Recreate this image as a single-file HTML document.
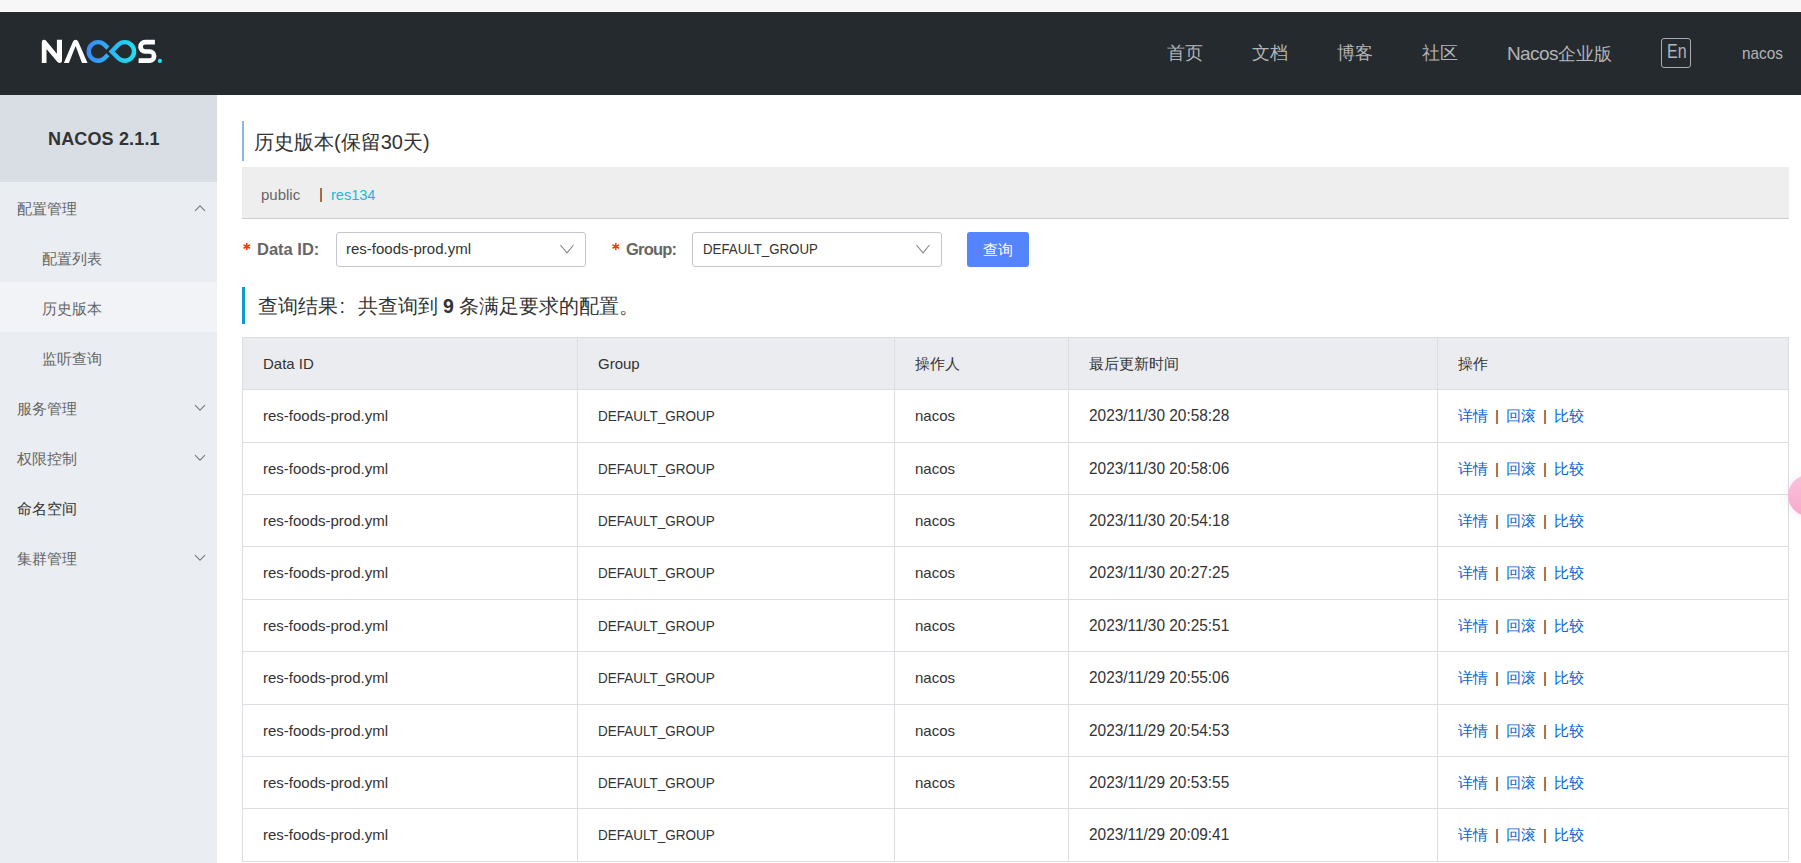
<!DOCTYPE html>
<html><head><meta charset="utf-8">
<style>
*{margin:0;padding:0;box-sizing:border-box}
html,body{width:1801px;height:863px;overflow:hidden;background:#fff;font-family:"Liberation Sans",sans-serif;color:#333}
.abs{position:absolute}
.t{position:absolute;white-space:nowrap}
#topstrip{left:0;top:0;width:1801px;height:11px;background:#f7f7f7}
#header{left:0;top:12px;width:1801px;height:83px;background:#252a2f}
.nav{position:absolute;top:0;height:83px;line-height:83px;color:#b3b4b6;font-size:17.5px;white-space:nowrap}
#side{left:0;top:95px;width:217px;height:768px;background:#eaedf1}
#sidetitle{left:0;top:0;width:217px;height:87px;background:#d9dee4}
.mi{position:absolute;left:0;width:217px;height:50px;font-size:15px;color:#666;white-space:nowrap}
.mi span{position:absolute;top:17px;line-height:20px}
.mi.sub span{left:42px}
.mi.top span{left:17px}
.mi.sel{background:#f2f3f7}
.chev{position:absolute;left:194px}
.lk .a{color:#0563d3}
.lk .sp{color:#333;margin:0 7px}
.sx{display:inline-block;transform-origin:0 50%}
</style></head><body>
<div id="topstrip" class="abs"></div>
<div id="header" class="abs">
<svg class="abs" style="left:40px;top:26px" width="130" height="30" viewBox="0 0 130 30">
    <defs><linearGradient id="g1" gradientUnits="userSpaceOnUse" x1="47" x2="97" y1="0" y2="0"><stop offset="0" stop-color="#3b88f7"/><stop offset="1" stop-color="#1ce6f2"/></linearGradient></defs>
    <path d="M1.8 24.9 V4 Q1.8 1.8 4 1.8 Q5.4 1.8 6.3 3 L16.9 15.7 V1.8 H22 V22.7 Q22 24.9 19.6 24.9 Q18 24.9 17 23.6 L6.5 10.9 V24.9 Z" fill="#fff"/>
    <path d="M23.9 24.9 L33 3.6 Q33.8 1.8 35.6 1.8 Q37.4 1.8 38.2 3.6 L47.5 24.9 H42 L35.6 7.9 L28.9 24.9 Z" fill="#fff"/>
    <path d="M67.9 10.1 L64.63 6.87 A9.3 9.3 0 1 0 64.63 20.03 L67.9 16.8" fill="none" stroke="url(#g1)" stroke-width="4.4"/>
    <path d="M71.6 13.45 L78.17 6.87 A9.3 9.3 0 1 1 78.17 20.03 Z" fill="none" stroke="url(#g1)" stroke-width="4.4" stroke-linejoin="miter"/>
    <path d="M114.9 4.15 H105.2 A4.675 4.675 0 0 0 105.2 13.5 H109.6 A4.525 4.525 0 0 1 109.6 22.55 H98.6" fill="none" stroke="#fff" stroke-width="4.7"/>
    <circle cx="119.9" cy="22.9" r="2.1" fill="#1ce6f2"/>
  </svg>
<div class="nav" style="left:1167px">首页</div>
<div class="nav" style="left:1252px">文档</div>
<div class="nav" style="left:1337px">博客</div>
<div class="nav" style="left:1422px">社区</div>
<div class="nav" style="left:1507px"><span style="font-size:19px;letter-spacing:-0.6px">Nacos</span>企业版</div>
<div class="abs" style="left:1661px;top:26px;width:30px;height:30px;border:1px solid #a9abad;border-radius:3px"></div>
<div class="nav" style="left:1667px;top:-2px;font-size:19.5px"><span class="sx" style="transform:scaleX(0.82)">En</span></div>
<div class="nav" style="left:1742px;top:0px;font-size:17px"><span class="sx" style="transform:scaleX(0.9)">nacos</span></div>
</div>
<div id="side" class="abs">
<div id="sidetitle" class="abs"><div class="t" style="left:48px;top:29px;line-height:30px;font-weight:bold;font-size:18px;letter-spacing:0.15px;color:#333">NACOS 2.1.1</div></div>
<div class="mi top" style="top:87px;"><span>配置管理</span><svg class="chev" style="top:22px" width="12" height="8" viewBox="0 0 12 8"><path d="M1 6.8 L6 1.8 L11 6.8" fill="none" stroke="#7a7a7a" stroke-width="1.05"/></svg></div>
<div class="mi sub" style="top:137px;"><span>配置列表</span></div>
<div class="mi sub sel" style="top:187px;"><span>历史版本</span></div>
<div class="mi sub" style="top:237px;"><span>监听查询</span></div>
<div class="mi top" style="top:287px;"><span>服务管理</span><svg class="chev" style="top:22px" width="12" height="8" viewBox="0 0 12 8"><path d="M1 1.2 L6 6.2 L11 1.2" fill="none" stroke="#7a7a7a" stroke-width="1.05"/></svg></div>
<div class="mi top" style="top:337px;"><span>权限控制</span><svg class="chev" style="top:22px" width="12" height="8" viewBox="0 0 12 8"><path d="M1 1.2 L6 6.2 L11 1.2" fill="none" stroke="#7a7a7a" stroke-width="1.05"/></svg></div>
<div class="mi top" style="top:387px;color:#333"><span>命名空间</span></div>
<div class="mi top" style="top:437px;"><span>集群管理</span><svg class="chev" style="top:22px" width="12" height="8" viewBox="0 0 12 8"><path d="M1 1.2 L6 6.2 L11 1.2" fill="none" stroke="#7a7a7a" stroke-width="1.05"/></svg></div>
</div>
<div class="abs" style="left:242px;top:121px;width:2px;height:40px;background:#88b7e0"></div>
<div class="t" style="left:254px;top:127px;font-size:20px;line-height:30px;color:#333">历史版本(保留30天)</div>
<div class="abs" style="left:242px;top:167px;width:1547px;height:52px;background:#eee;border-bottom:1px solid #ccc"></div>
<div class="t" style="left:261px;top:185px;font-size:15px;line-height:20px;color:#666">public</div>
<div class="t" style="left:319px;top:184px;font-size:15px;line-height:20px;color:#333">|</div>
<div class="t" style="left:331px;top:185px;font-size:14.5px;line-height:20px;color:#0fbddf">res134</div>
<svg class="abs" style="left:242px;top:242px" width="9" height="9" viewBox="0 0 9 9"><g stroke="#ff3300" stroke-width="1.5" stroke-linecap="round"><path d="M4.8 1.6 V7.4"/><path d="M2 3.1 L7.6 6"/><path d="M2 6 L7.6 3.1"/></g></svg>
<div class="t" style="left:257px;top:239px;font-size:16.5px;line-height:20px;color:#666;font-weight:bold">Data ID:</div>
<div class="abs" style="left:336px;top:232px;width:250px;height:35px;border:1px solid #c4c6cf;border-radius:3px;background:#fff"></div>
<div class="t" style="left:346px;top:239px;font-size:15px;line-height:20px;color:#333">res-foods-prod.yml</div>
<svg class="abs" style="left:559px;top:244px" width="16" height="10" viewBox="0 0 16 10"><path d="M1.5 1 L8 8.8 L14.5 1" fill="none" stroke="#858585" stroke-width="1.1"/></svg>
<svg class="abs" style="left:611px;top:242px" width="9" height="9" viewBox="0 0 9 9"><g stroke="#ff3300" stroke-width="1.5" stroke-linecap="round"><path d="M4.8 1.6 V7.4"/><path d="M2 3.1 L7.6 6"/><path d="M2 6 L7.6 3.1"/></g></svg>
<div class="t" style="left:626px;top:239px;font-size:16.5px;line-height:20px;color:#666;font-weight:bold;letter-spacing:-0.8px">Group:</div>
<div class="abs" style="left:692px;top:232px;width:250px;height:35px;border:1px solid #c4c6cf;border-radius:3px;background:#fff"></div>
<div class="t" style="left:703px;top:239px;font-size:15px;line-height:20px;color:#333"><span class="sx" style="transform:scaleX(0.885)">DEFAULT_GROUP</span></div>
<svg class="abs" style="left:915px;top:244px" width="16" height="10" viewBox="0 0 16 10"><path d="M1.5 1 L8 8.8 L14.5 1" fill="none" stroke="#858585" stroke-width="1.1"/></svg>
<div class="abs" style="left:967px;top:232px;width:62px;height:35px;border-radius:3px;background:#5584ff;color:#fff;font-size:15px;line-height:35px;text-align:center">查询</div>
<div class="abs" style="left:242px;top:287px;width:3px;height:37px;background:#0e9ad0"></div>
<div class="t" style="left:258px;top:292px;font-size:19.5px;line-height:28px;color:#333">查询结果<span style="display:inline-block;width:19.5px;padding-left:1.6px">:</span>共查询到 <b>9</b> 条满足要求的配置。</div>
<div class="abs" style="left:242px;top:337px;width:1547px;height:53px;background:#ebecf0"></div>
<div class="abs" style="left:242px;top:337px;width:1547px;height:1px;background:#dcdee3"></div>
<div class="abs" style="left:242px;top:389px;width:1547px;height:1px;background:#dcdee3"></div>
<div class="abs" style="left:242px;top:442px;width:1547px;height:1px;background:#dcdee3"></div>
<div class="abs" style="left:242px;top:494px;width:1547px;height:1px;background:#dcdee3"></div>
<div class="abs" style="left:242px;top:546px;width:1547px;height:1px;background:#dcdee3"></div>
<div class="abs" style="left:242px;top:599px;width:1547px;height:1px;background:#dcdee3"></div>
<div class="abs" style="left:242px;top:651px;width:1547px;height:1px;background:#dcdee3"></div>
<div class="abs" style="left:242px;top:704px;width:1547px;height:1px;background:#dcdee3"></div>
<div class="abs" style="left:242px;top:756px;width:1547px;height:1px;background:#dcdee3"></div>
<div class="abs" style="left:242px;top:808px;width:1547px;height:1px;background:#dcdee3"></div>
<div class="abs" style="left:242px;top:861px;width:1547px;height:1px;background:#dcdee3"></div>
<div class="abs" style="left:242px;top:337px;width:1px;height:525px;background:#dcdee3"></div>
<div class="abs" style="left:577px;top:337px;width:1px;height:525px;background:#dcdee3"></div>
<div class="abs" style="left:894px;top:337px;width:1px;height:525px;background:#dcdee3"></div>
<div class="abs" style="left:1068px;top:337px;width:1px;height:525px;background:#dcdee3"></div>
<div class="abs" style="left:1437px;top:337px;width:1px;height:525px;background:#dcdee3"></div>
<div class="abs" style="left:1788px;top:337px;width:1px;height:525px;background:#dcdee3"></div>
<div class="t" style="left:263px;top:354.0px;font-size:15px;line-height:20px;color:#333">Data ID</div>
<div class="t" style="left:598px;top:354.0px;font-size:15px;line-height:20px;color:#333">Group</div>
<div class="t" style="left:915px;top:354.0px;font-size:15px;line-height:20px;color:#333">操作人</div>
<div class="t" style="left:1089px;top:354.0px;font-size:15px;line-height:20px;color:#333">最后更新时间</div>
<div class="t" style="left:1458px;top:354.0px;font-size:15px;line-height:20px;color:#333">操作</div>
<div class="t" style="left:263px;top:406.0px;font-size:15px;line-height:20px;color:#333">res-foods-prod.yml</div>
<div class="t" style="left:598px;top:406.0px;font-size:15px;line-height:20px;color:#333"><span class="sx" style="transform:scaleX(0.9)">DEFAULT_GROUP</span></div>
<div class="t" style="left:915px;top:406.0px;font-size:15px;line-height:20px;color:#333">nacos</div>
<div class="t" style="left:1089px;top:406.0px;font-size:16px;line-height:20px;color:#333"><span class="sx" style="transform:scaleX(0.963)">2023/11/30 20:58:28</span></div>
<div class="t lk" style="left:1458px;top:406.0px;font-size:15px;line-height:20px"><span class="a">详情</span><span class="sp">|</span><span class="a">回滚</span><span class="sp">|</span><span class="a">比较</span></div>
<div class="t" style="left:263px;top:458.5px;font-size:15px;line-height:20px;color:#333">res-foods-prod.yml</div>
<div class="t" style="left:598px;top:458.5px;font-size:15px;line-height:20px;color:#333"><span class="sx" style="transform:scaleX(0.9)">DEFAULT_GROUP</span></div>
<div class="t" style="left:915px;top:458.5px;font-size:15px;line-height:20px;color:#333">nacos</div>
<div class="t" style="left:1089px;top:458.5px;font-size:16px;line-height:20px;color:#333"><span class="sx" style="transform:scaleX(0.963)">2023/11/30 20:58:06</span></div>
<div class="t lk" style="left:1458px;top:458.5px;font-size:15px;line-height:20px"><span class="a">详情</span><span class="sp">|</span><span class="a">回滚</span><span class="sp">|</span><span class="a">比较</span></div>
<div class="t" style="left:263px;top:510.5px;font-size:15px;line-height:20px;color:#333">res-foods-prod.yml</div>
<div class="t" style="left:598px;top:510.5px;font-size:15px;line-height:20px;color:#333"><span class="sx" style="transform:scaleX(0.9)">DEFAULT_GROUP</span></div>
<div class="t" style="left:915px;top:510.5px;font-size:15px;line-height:20px;color:#333">nacos</div>
<div class="t" style="left:1089px;top:510.5px;font-size:16px;line-height:20px;color:#333"><span class="sx" style="transform:scaleX(0.963)">2023/11/30 20:54:18</span></div>
<div class="t lk" style="left:1458px;top:510.5px;font-size:15px;line-height:20px"><span class="a">详情</span><span class="sp">|</span><span class="a">回滚</span><span class="sp">|</span><span class="a">比较</span></div>
<div class="t" style="left:263px;top:563.0px;font-size:15px;line-height:20px;color:#333">res-foods-prod.yml</div>
<div class="t" style="left:598px;top:563.0px;font-size:15px;line-height:20px;color:#333"><span class="sx" style="transform:scaleX(0.9)">DEFAULT_GROUP</span></div>
<div class="t" style="left:915px;top:563.0px;font-size:15px;line-height:20px;color:#333">nacos</div>
<div class="t" style="left:1089px;top:563.0px;font-size:16px;line-height:20px;color:#333"><span class="sx" style="transform:scaleX(0.963)">2023/11/30 20:27:25</span></div>
<div class="t lk" style="left:1458px;top:563.0px;font-size:15px;line-height:20px"><span class="a">详情</span><span class="sp">|</span><span class="a">回滚</span><span class="sp">|</span><span class="a">比较</span></div>
<div class="t" style="left:263px;top:615.5px;font-size:15px;line-height:20px;color:#333">res-foods-prod.yml</div>
<div class="t" style="left:598px;top:615.5px;font-size:15px;line-height:20px;color:#333"><span class="sx" style="transform:scaleX(0.9)">DEFAULT_GROUP</span></div>
<div class="t" style="left:915px;top:615.5px;font-size:15px;line-height:20px;color:#333">nacos</div>
<div class="t" style="left:1089px;top:615.5px;font-size:16px;line-height:20px;color:#333"><span class="sx" style="transform:scaleX(0.963)">2023/11/30 20:25:51</span></div>
<div class="t lk" style="left:1458px;top:615.5px;font-size:15px;line-height:20px"><span class="a">详情</span><span class="sp">|</span><span class="a">回滚</span><span class="sp">|</span><span class="a">比较</span></div>
<div class="t" style="left:263px;top:668.0px;font-size:15px;line-height:20px;color:#333">res-foods-prod.yml</div>
<div class="t" style="left:598px;top:668.0px;font-size:15px;line-height:20px;color:#333"><span class="sx" style="transform:scaleX(0.9)">DEFAULT_GROUP</span></div>
<div class="t" style="left:915px;top:668.0px;font-size:15px;line-height:20px;color:#333">nacos</div>
<div class="t" style="left:1089px;top:668.0px;font-size:16px;line-height:20px;color:#333"><span class="sx" style="transform:scaleX(0.963)">2023/11/29 20:55:06</span></div>
<div class="t lk" style="left:1458px;top:668.0px;font-size:15px;line-height:20px"><span class="a">详情</span><span class="sp">|</span><span class="a">回滚</span><span class="sp">|</span><span class="a">比较</span></div>
<div class="t" style="left:263px;top:720.5px;font-size:15px;line-height:20px;color:#333">res-foods-prod.yml</div>
<div class="t" style="left:598px;top:720.5px;font-size:15px;line-height:20px;color:#333"><span class="sx" style="transform:scaleX(0.9)">DEFAULT_GROUP</span></div>
<div class="t" style="left:915px;top:720.5px;font-size:15px;line-height:20px;color:#333">nacos</div>
<div class="t" style="left:1089px;top:720.5px;font-size:16px;line-height:20px;color:#333"><span class="sx" style="transform:scaleX(0.963)">2023/11/29 20:54:53</span></div>
<div class="t lk" style="left:1458px;top:720.5px;font-size:15px;line-height:20px"><span class="a">详情</span><span class="sp">|</span><span class="a">回滚</span><span class="sp">|</span><span class="a">比较</span></div>
<div class="t" style="left:263px;top:772.5px;font-size:15px;line-height:20px;color:#333">res-foods-prod.yml</div>
<div class="t" style="left:598px;top:772.5px;font-size:15px;line-height:20px;color:#333"><span class="sx" style="transform:scaleX(0.9)">DEFAULT_GROUP</span></div>
<div class="t" style="left:915px;top:772.5px;font-size:15px;line-height:20px;color:#333">nacos</div>
<div class="t" style="left:1089px;top:772.5px;font-size:16px;line-height:20px;color:#333"><span class="sx" style="transform:scaleX(0.963)">2023/11/29 20:53:55</span></div>
<div class="t lk" style="left:1458px;top:772.5px;font-size:15px;line-height:20px"><span class="a">详情</span><span class="sp">|</span><span class="a">回滚</span><span class="sp">|</span><span class="a">比较</span></div>
<div class="t" style="left:263px;top:825.0px;font-size:15px;line-height:20px;color:#333">res-foods-prod.yml</div>
<div class="t" style="left:598px;top:825.0px;font-size:15px;line-height:20px;color:#333"><span class="sx" style="transform:scaleX(0.9)">DEFAULT_GROUP</span></div>
<div class="t" style="left:1089px;top:825.0px;font-size:16px;line-height:20px;color:#333"><span class="sx" style="transform:scaleX(0.963)">2023/11/29 20:09:41</span></div>
<div class="t lk" style="left:1458px;top:825.0px;font-size:15px;line-height:20px"><span class="a">详情</span><span class="sp">|</span><span class="a">回滚</span><span class="sp">|</span><span class="a">比较</span></div>
<div class="abs" style="left:1788px;top:475px;width:41px;height:41px;border-radius:50%;background:linear-gradient(180deg,#fbc2dc,#f7a9cc);box-shadow:0 0 12px rgba(0,0,0,0.08)"></div>
</body></html>
